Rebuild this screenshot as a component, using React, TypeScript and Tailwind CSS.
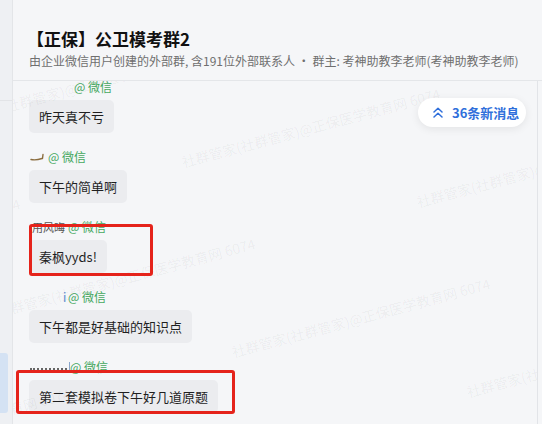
import { ReactNode } from "react";

const WATERMARK = "社群管家(社群管家)@正保医学教育网 6074";

// watermark tiles repeat on a lattice; centres are relative to the message pane
const marks: { x: number; y: number }[] = [];
for (let i = -2; i <= 2; i++) {
  for (let j = -1; j <= 2; j++) {
    marks.push({ x: 298 + 235 * i + 50 * j, y: 47 + 40 * i + 190 * j });
  }
}

type Msg = { name: ReactNode; text: string };

const Squiggle = () => (
  <svg width="15" height="8" viewBox="0 0 15 8" fill="none" aria-hidden>
    <path d="M1 6.5 Q6 7.5 12 5.5 M12.5 5.5 L13 1.5" stroke="#8b6d3f" strokeWidth="1.4" strokeLinecap="round" />
  </svg>
);

const messages: Msg[] = [
  { name: <span className="inline-block w-[45px]" />, text: "昨天真不亏" },
  {
    name: (
      <span className="inline-flex w-[19px] items-center pl-[1px]">
        <Squiggle />
      </span>
    ),
    text: "下午的简单啊",
  },
  {
    name: <span className="inline-block w-[39px] pl-[3px] text-[11px] text-[#555]">用风晦</span>,
    text: "秦枫yyds!",
  },
  {
    name: <span className="inline-block w-[39px] pl-[34px] text-[#5b8bd0]">i</span>,
    text: "下午都是好基础的知识点",
  },
  {
    name: (
      <span className="flex w-[41px] items-end self-stretch pb-[5px] pl-[1px]">
        <span className="h-[2px] w-[37px] border-b-2 border-dotted border-[#666]" />
        <span className="ml-[2px] h-[8px] w-px bg-[#8aa6cc]" />
      </span>
    ),
    text: "第二套模拟卷下午好几道原题",
  },
];

function Message({ msg }: { msg: Msg }) {
  return (
    <div className="mb-4">
      <div className="flex h-4 items-center text-[12px] leading-4">
        {msg.name}
        <span className="text-[#45a85f]">@ 微信</span>
      </div>
      <div className="mt-[5px] inline-flex h-[33px] items-center rounded-[5px] bg-[#ebecef] px-[10px] text-[13px] text-[#1f1f1f]">
        {msg.text}
      </div>
    </div>
  );
}

export default function App() {
  return (
    <div className="flex h-[424px] w-[542px] overflow-hidden bg-[#f5f6f8] font-['Noto_Sans_CJK_SC',sans-serif]">
      <aside className="w-[13px] shrink-0 border-r border-[#e3e5e8] bg-[#eef0f3]">
        <div className="h-[101px] border-b border-[#e2e4e7]" />
        <div className="mt-[252px] h-[60px] w-[8px] rounded-r-[3px] bg-[#d4e2f3]" />
      </aside>

      <main className="flex min-w-0 flex-1 flex-col">
        <header className="h-[81px] shrink-0 border-b border-[#e4e6e9] pl-[14px] pt-[27px]">
          <h1 className="text-[17px] font-bold leading-6 text-[#111]">【正保】公卫模考群2</h1>
          <p className="mt-[2px] pl-[2px] text-[12px] leading-4 text-[#6f6f6f]">
            由企业微信用户创建的外部群, 含191位外部联系人 · 群主: 考神助教李老师(考神助教李老师)
          </p>
        </header>

        <div className="relative mr-[4px] flex-1 overflow-hidden border-r border-[#e2e4e8]">
          <div className="-mt-[2px] px-4">
            {messages.map((m) => (
              <Message key={m.text} msg={m} />
            ))}
          </div>

          <div className="pointer-events-none absolute inset-0">
            {marks.map((m) => (
              <span
                key={`${m.x}-${m.y}`}
                className="absolute -translate-x-1/2 -translate-y-1/2 -rotate-[15deg] whitespace-nowrap text-[14px] text-black/[0.05]"
                style={{ left: m.x, top: m.y }}
              >
                {WATERMARK}
              </span>
            ))}
          </div>

          <button className="absolute right-[11px] top-[17px] flex h-[29px] w-[108px] items-center gap-[9px] rounded-full bg-white pl-[15px] text-[13px] font-bold text-[#2f6fdb] shadow-[0_2px_8px_rgba(0,0,0,0.08)]">
            <svg width="10" height="11" viewBox="0 0 10 11" fill="none" aria-hidden>
              <path d="M1 5 L5 1.2 L9 5 M1 10 L5 6.2 L9 10" stroke="currentColor" strokeWidth="1.5" strokeLinecap="round" strokeLinejoin="round" />
            </svg>
            36条新消息
          </button>

          <div className="pointer-events-none absolute left-[16px] top-[143px] h-[52px] w-[124px] rounded-[3px] border-[3px] border-[#e5231b]" />
          <div className="pointer-events-none absolute left-[3px] top-[289px] h-[44px] w-[219px] rounded-[3px] border-[3px] border-[#e5231b]" />
        </div>
      </main>
    </div>
  );
}
